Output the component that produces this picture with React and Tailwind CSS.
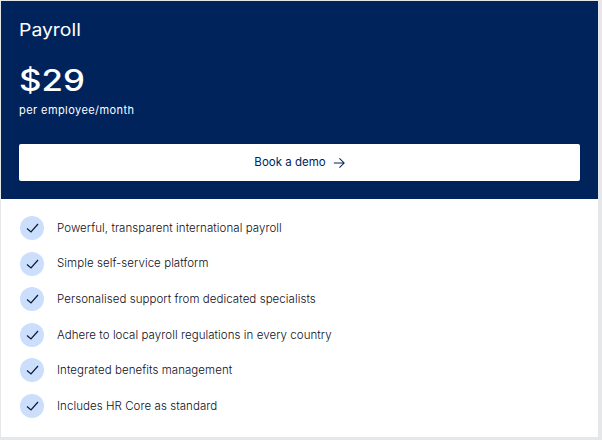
import React from "react";

const items = [
  "Powerful, transparent international payroll",
  "Simple self-service platform",
  "Personalised support from dedicated specialists",
  "Adhere to local payroll regulations in every country",
  "Integrated benefits management",
  "Includes HR Core as standard",
];

function Check() {
  return (
    <svg width="24" height="24" viewBox="0 0 24 24" fill="none" stroke="#0b1a38" strokeWidth="1.2">
      <path d="M7 12.5 L11 16 L18 8" />
    </svg>
  );
}

export default function App() {
  return (
    <div className="w-[602px] h-[440px] bg-[#e6e7e8] pl-px pt-px pr-1 pb-[3px] font-['Inter',sans-serif]">
      <div className="h-full bg-white flex flex-col">
        <div className="h-[198px] bg-[#00235c] text-white px-[18px] pt-[17px]">
          <div className="w-fit text-[17px] leading-[24px] font-normal origin-left scale-x-[1.14]">Payroll</div>
          <div className="w-fit mt-[20px] text-[30px] leading-[36px] font-medium origin-left scale-x-[1.16]">$29</div>
          <div className="mt-[4px] text-[11px] leading-[16px] tracking-[0.42px]">per employee/month</div>
          <button className="mt-[26px] w-[561px] h-[37px] bg-white rounded-[2px] flex items-center justify-center gap-[7px] text-[#00235c] text-[11.5px]">
            Book a demo
            <svg width="12" height="12" viewBox="0 0 14 14" fill="none" stroke="#00235c" strokeWidth="1.2">
              <path d="M1 7 H12.5 M7.5 1.5 L13 7 L7.5 12.5" />
            </svg>
          </button>
        </div>
        <ul className="flex flex-col gap-[11.6px] pl-[19px] pt-[17px]">
          {items.map((t) => (
            <li key={t} className="flex items-center gap-[13px] h-[24px]">
              <span className="w-[24px] h-[24px] rounded-full bg-[#cbdefc] flex items-center justify-center shrink-0">
                <Check />
              </span>
              <span className="pt-px text-[11.5px] tracking-[0.06px] font-light text-[#0e0e1c]">{t}</span>
            </li>
          ))}
        </ul>
      </div>
    </div>
  );
}
